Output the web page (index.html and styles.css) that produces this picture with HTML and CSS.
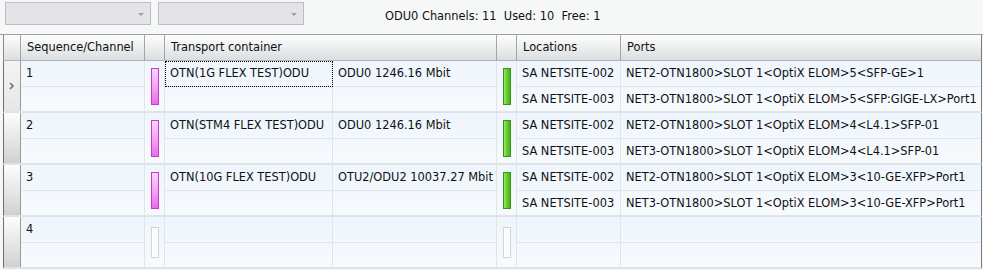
FILE: index.html
```html
<!DOCTYPE html>
<html>
<head>
<meta charset="utf-8">
<link rel="stylesheet" href="styles.css">
</head>
<body>
<div class="top">
  <div class="combo"><span class="arrow"></span></div>
  <div class="combo"><span class="arrow"></span></div>
  <div class="status">ODU0 Channels: 11&nbsp; Used: 10&nbsp; Free: 1</div>
</div>
<div class="grid">
  <div class="hrow">
    <div class="hc rh"></div>
    <div class="hc">Sequence/Channel</div>
    <div class="hc"></div>
    <div class="hc span2">Transport container</div>
    <div class="hc"></div>
    <div class="hc">Locations</div>
    <div class="hc last">Ports</div>
  </div>

  <div class="row">
    <div class="rhc sel"><svg width="8" height="8" viewBox="0 0 8 8"><path d="M2 1 L5 4 L2 7" fill="none" stroke="#6e6e86" stroke-width="1.6"/></svg></div>
    <div class="c seq">1</div>
    <div class="c col"><span class="bar pink"></span></div>
    <div class="c name focus">OTN(1G FLEX TEST)ODU</div>
    <div class="c bw">ODU0 1246.16 Mbit</div>
    <div class="c st"><span class="bar green"></span></div>
    <div class="c loc1">SA NETSITE-002</div>
    <div class="c p1">NET2-OTN1800&gt;SLOT 1&lt;OptiX ELOM&gt;5&lt;SFP-GE&gt;1</div>
    <div class="c seq2"></div>
    <div class="c name2"></div>
    <div class="c bw2"></div>
    <div class="c loc2">SA NETSITE-003</div>
    <div class="c p2">NET3-OTN1800&gt;SLOT 1&lt;OptiX ELOM&gt;5&lt;SFP:GIGE-LX&gt;Port1</div>
  </div>

  <div class="row">
    <div class="rhc"></div>
    <div class="c seq">2</div>
    <div class="c col"><span class="bar pink"></span></div>
    <div class="c name">OTN(STM4 FLEX TEST)ODU</div>
    <div class="c bw">ODU0 1246.16 Mbit</div>
    <div class="c st"><span class="bar green"></span></div>
    <div class="c loc1">SA NETSITE-002</div>
    <div class="c p1">NET2-OTN1800&gt;SLOT 1&lt;OptiX ELOM&gt;4&lt;L4.1&gt;SFP-01</div>
    <div class="c seq2"></div>
    <div class="c name2"></div>
    <div class="c bw2"></div>
    <div class="c loc2">SA NETSITE-003</div>
    <div class="c p2">NET3-OTN1800&gt;SLOT 1&lt;OptiX ELOM&gt;4&lt;L4.1&gt;SFP-01</div>
  </div>

  <div class="row">
    <div class="rhc"></div>
    <div class="c seq">3</div>
    <div class="c col"><span class="bar pink"></span></div>
    <div class="c name">OTN(10G FLEX TEST)ODU</div>
    <div class="c bw">OTU2/ODU2 10037.27 Mbit</div>
    <div class="c st"><span class="bar green"></span></div>
    <div class="c loc1">SA NETSITE-002</div>
    <div class="c p1">NET2-OTN1800&gt;SLOT 1&lt;OptiX ELOM&gt;3&lt;10-GE-XFP&gt;Port1</div>
    <div class="c seq2"></div>
    <div class="c name2"></div>
    <div class="c bw2"></div>
    <div class="c loc2">SA NETSITE-003</div>
    <div class="c p2">NET3-OTN1800&gt;SLOT 1&lt;OptiX ELOM&gt;3&lt;10-GE-XFP&gt;Port1</div>
  </div>

  <div class="row">
    <div class="rhc"></div>
    <div class="c seq">4</div>
    <div class="c col"><span class="bar empty"></span></div>
    <div class="c name"></div>
    <div class="c bw"></div>
    <div class="c st"><span class="bar empty"></span></div>
    <div class="c loc1"></div>
    <div class="c p1"></div>
    <div class="c seq2"></div>
    <div class="c name2"></div>
    <div class="c bw2"></div>
    <div class="c loc2"></div>
    <div class="c p2"></div>
  </div>
</div>
</body>
</html>
```
FILE: styles.css
```css
html, body {
  margin: 0;
  padding: 0;
  background: #f6f8f8;
  font-family: "DejaVu Sans", Verdana, sans-serif;
  font-size: 11.4px;
  color: #101010;
}
.top {
  height: 34px;
  display: flex;
  align-items: flex-start;
  padding: 2px 0 0 5px;
  box-sizing: border-box;
  gap: 7px;
}
.combo {
  width: 146px;
  height: 23px;
  box-sizing: border-box;
  background: #e4e4e8;
  border: 1px solid #b9bdc4;
  position: relative;
}
.combo .arrow {
  position: absolute;
  right: 6px;
  top: 10px;
  width: 0;
  height: 0;
  border-left: 3px solid transparent;
  border-right: 3px solid transparent;
  border-top: 3px solid #a0a0a4;
}
.status {
  margin-left: 74px;
  padding-top: 7px;
  white-space: pre;
}
.grid {
  border-top: 1px solid #a0a0a0;
  padding: 0 1px 0 3px;
}
.hrow, .row {
  display: grid;
  grid-template-columns: 17px 124px 20px 168px 164px 20px 104px 1fr;
  border-left: 1px solid #8a8a8a;
  border-right: 1px solid #7a7a7a;
}
.hrow {
  height: 26px;
  box-sizing: border-box;
  border-bottom: 1px solid #b4b4b4;
  background: linear-gradient(#fbfdfd, #f2f3f4 35%, #dcdde0);
}
.hc {
  border-right: 1px solid #a4a4a4;
  padding-left: 6px;
  line-height: 25px;
  white-space: nowrap;
}
.hc.rh { padding: 0; }
.hc.span2 { grid-column: span 2; }
.hc.last { border-right: none; }
.row {
  grid-template-rows: 26px 24px;
  border-bottom: 2px solid #dfe3e7;
  background: linear-gradient(#eef5fc, #f7fafd);
}
.rhc {
  grid-row: span 2;
  border-right: 1px solid #9a9a9a;
  border-left: 1px solid #6e6e6e;
  margin-left: -1px;
  background: linear-gradient(#fdfdfd, #e8e8e8 50%, #d0d0d2);
  display: flex;
  align-items: flex-end;
  justify-content: center;
  padding-bottom: 21px;
  box-sizing: border-box;
}
.rhc.sel {
  background: linear-gradient(#f4f4f4, #e6e6e6);
}
.c {
  border-right: 1px solid #e1e4e8;
  padding-left: 5px;
  white-space: nowrap;
  overflow: hidden;
  box-sizing: border-box;
}
.seq, .name, .bw, .loc1, .p1 {
  border-bottom: 1px solid #e1e4e8;
  line-height: 24px;
}
.seq2, .name2, .bw2, .loc2, .p2 {
  line-height: 24px;
}
.p1, .p2 { border-right: none; }
.col, .st {
  grid-row: span 2;
  display: flex;
  align-items: center;
  justify-content: center;
  padding-left: 0;
}
.seq { grid-column: 2; }
.seq2 { grid-column: 2; grid-row: 2; }
.name2 { grid-column: 4; grid-row: 2; }
.bw2 { grid-column: 5; grid-row: 2; }
.loc2 { grid-column: 7; grid-row: 2; }
.p2 { grid-column: 8; grid-row: 2; }
.focus {
  outline: 1px dotted #000;
  outline-offset: -1px;
}
.bar {
  display: block;
  width: 8px;
  height: 37px;
  box-sizing: border-box;
}
.pink {
  border: 1px solid #c43cc4;
  background: linear-gradient(#fbd4fb, #f29af2 60%, #e86ce8);
}
.green {
  border: 1px solid #3b8f1c;
  background: linear-gradient(to right, #9ae86a, #62cc2c 50%, #46b616);
}
.empty {
  border: 1px solid #d4d4d4;
  background: #fdfdfd;
  height: 31px;
  align-self: flex-start;
  margin-top: 10px;
}
```
